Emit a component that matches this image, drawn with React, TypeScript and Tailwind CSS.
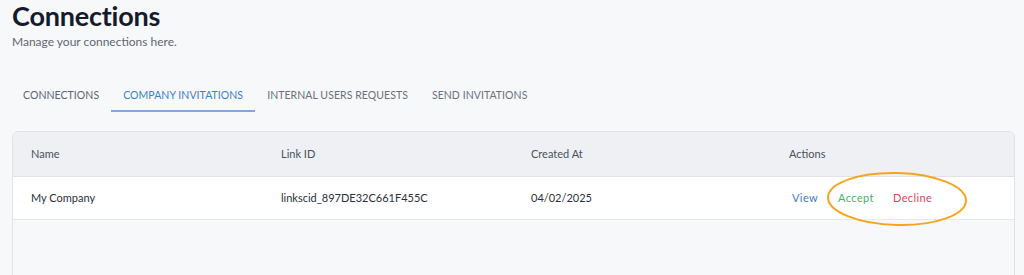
import React from "react";

export default function App() {
  return (
    <div className="w-[1024px] h-[275px] overflow-hidden bg-[#f7f8fa] font-['Lato','Noto_Sans',sans-serif] text-[#1e2433]">
      <div className="px-3">
        <h1 className="text-[27px] font-bold leading-[32px] text-[#151b2b] tracking-[-0.2px]">Connections</h1>
        <p className="text-[12px] leading-[16px] text-[#5f6676] mt-[2px]">Manage your connections here.</p>
      </div>
      <div className="flex mt-[26px] ml-[11px] text-[10.5px] leading-[14px] uppercase tracking-[0.06px]">
        <div className="px-3 pt-[12px] pb-[10px] text-[#5e6470]">Connections</div>
        <div className="px-3 pt-[12px] pb-[8px] text-[#3a7fd0] border-b-2 border-[#7ea8df]">Company Invitations</div>
        <div className="px-3 pt-[12px] pb-[10px] text-[#6b717c]">Internal Users Requests</div>
        <div className="px-3 pt-[12px] pb-[10px] text-[#6b717c]">Send Invitations</div>
      </div>
      <div className="mx-3 mt-[19px] mr-[9px] border border-[#e1e3e8] rounded-t-[6px] overflow-hidden h-[200px]">
        <div className="flex h-[45px] items-center bg-[#eff0f4] border-b border-[#e1e3e8] text-[11px] text-[#4a505c]">
          <div className="w-[250px] pl-[18px]">Name</div>
          <div className="w-[250px] pl-[18px]">Link ID</div>
          <div className="w-[258px] pl-[18px]">Created At</div>
          <div className="pl-[18px]">Actions</div>
        </div>
        <div className="flex h-[43px] items-center bg-white border-b border-[#e6e8ec] text-[11px] text-[#2a2f3a]">
          <div className="w-[250px] pl-[18px]">My Company</div>
          <div className="w-[250px] pl-[18px]">linkscid_897DE32C661F455C</div>
          <div className="w-[258px] pl-[18px]">04/02/2025</div>
          <div className="pl-[21px] flex items-center relative tracking-[0.4px]">
            <span className="text-[#3b7bc8]">View</span>
            <span className="text-[#4caf6a] ml-[20px]">Accept</span>
            <span className="text-[#d9475a] ml-[19px]">Decline</span>
            <svg className="absolute left-[54px] top-[-20px]" width="145" height="58" viewBox="0 0 145 58">
              <ellipse cx="72" cy="29" rx="69" ry="26" fill="none" stroke="#f5a51c" strokeWidth="2" transform="rotate(1.5 72 29)" />
            </svg>
          </div>
        </div>
      </div>
    </div>
  );
}
